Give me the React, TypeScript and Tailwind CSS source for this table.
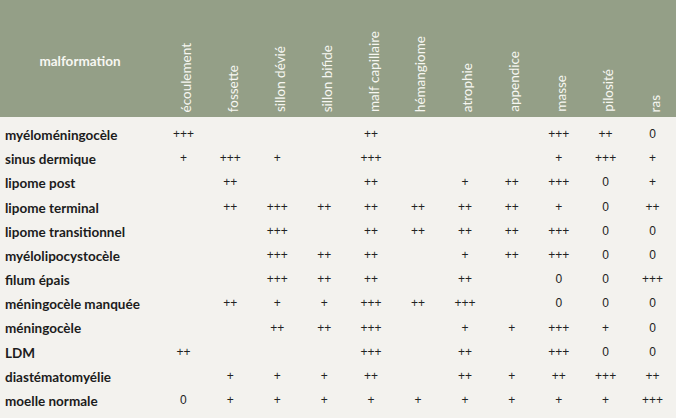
import React from "react";

const cols = [
  "écoulement",
  "fossette",
  "sillon dévié",
  "sillon bifide",
  "malf capillaire",
  "hémangiome",
  "atrophie",
  "appendice",
  "masse",
  "pilosité",
  "ras",
];

const rows: [string, string[]][] = [
  ["myéloméningocèle", ["+++", "", "", "", "++", "", "", "", "+++", "++", "0"]],
  ["sinus dermique", ["+", "+++", "+", "", "+++", "", "", "", "+", "+++", "+"]],
  ["lipome post", ["", "++", "", "", "++", "", "+", "++", "+++", "0", "+"]],
  ["lipome terminal", ["", "++", "+++", "++", "++", "++", "++", "++", "+", "0", "++"]],
  ["lipome transitionnel", ["", "", "+++", "", "++", "++", "++", "++", "+++", "0", "0"]],
  ["myélolipocystocèle", ["", "", "+++", "++", "++", "", "+", "++", "+++", "0", "0"]],
  ["filum épais", ["", "", "+++", "++", "++", "", "++", "", "0", "0", "+++"]],
  ["méningocèle manquée", ["", "++", "+", "+", "+++", "++", "+++", "", "0", "0", "0"]],
  ["méningocèle", ["", "", "++", "++", "+++", "", "+", "+", "+++", "+", "0"]],
  ["LDM", ["++", "", "", "", "+++", "", "++", "", "+++", "0", "0"]],
  ["diastématomyélie", ["", "+", "+", "+", "++", "", "++", "+", "++", "+++", "++"]],
  ["moelle normale", ["0", "+", "+", "+", "+", "+", "+", "+", "+", "+", "+++"]],
];

export default function App() {
  return (
    <div className="w-[676px] h-[418px] overflow-hidden bg-[#f3f2ee] font-['Lato',sans-serif]">
      <div className="grid grid-cols-[160px_repeat(11,1fr)] h-[117px] bg-[#949f87] text-[#f7f7f2]">
        <div className="flex items-center justify-center text-[13.5px] font-bold pt-[6px]">
          malformation
        </div>
        {cols.map((c) => (
          <div key={c} className="flex items-end justify-center pb-[5px] pl-[5px]">
            <span className="[writing-mode:vertical-rl] rotate-180 text-[13.5px] leading-[14px] whitespace-nowrap">
              {c}
            </span>
          </div>
        ))}
      </div>
      <div className="pt-[5px]">
        {rows.map(([label, vals]) => (
          <div key={label} className="grid grid-cols-[160px_repeat(11,1fr)] h-[24.2px] items-center">
            <div className="pl-[5px] text-[13.5px] font-bold text-[#1c1c1c] whitespace-nowrap pt-[2px]">
              {label}
            </div>
            {vals.map((v, i) => (
              <div
                key={i}
                className="text-center text-[12px] text-[#222] font-['Liberation_Sans',sans-serif]"
              >
                {v}
              </div>
            ))}
          </div>
        ))}
      </div>
    </div>
  );
}
